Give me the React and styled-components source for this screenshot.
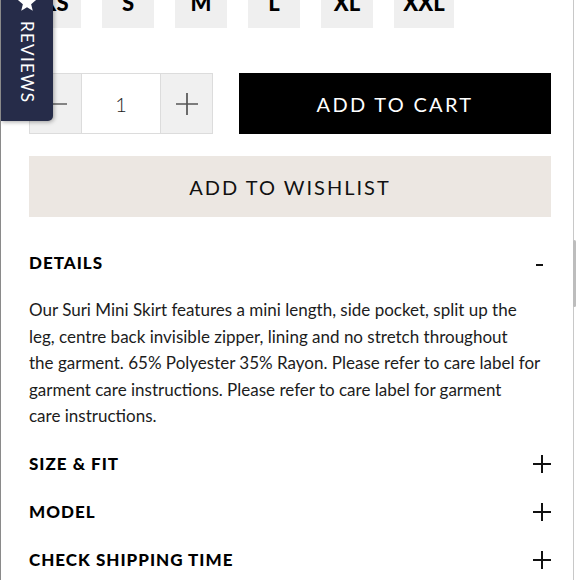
import React from "react"
import styled, { createGlobalStyle } from "styled-components"

const GlobalStyle = createGlobalStyle`
  html, body {
    margin: 0;
    padding: 0;
    background: #fff;
    overflow: hidden;
  }
  body {
    font-family: "Lato", "Open Sans", sans-serif;
    color: #111;
  }
`

const Frame = styled.div`
  position: relative;
  width: 580px;
  height: 580px;
  overflow: hidden;
  box-sizing: border-box;
  border-left: 1px solid #8a8a8a;
`

const RightEdge = styled.div`
  position: absolute;
  top: 0;
  bottom: 0;
  left: 572px;
  width: 1px;
  background: #c8c8c8;
`

const ScrollThumb = styled.div`
  position: absolute;
  top: 240px;
  left: 572px;
  width: 3px;
  height: 67px;
  border-radius: 2px;
  background: #bdbdbd;
`

const Content = styled.div`
  width: 522px;
  margin-left: 28px;
  margin-top: -24px;
  display: flex;
  flex-direction: column;
`

const SizeRow = styled.div`
  display: flex;
  gap: 21px;
`

const SizeBox = styled.div`
  width: ${(p) => (p.$wide ? 60 : 52)}px;
  height: 52px;
  background: #efefef;
  display: flex;
  align-items: center;
  justify-content: center;
  font-weight: 900;
  font-size: 22px;
  color: #000;
`

const BuyRow = styled.div`
  display: flex;
  margin-top: 45px;
  height: 61px;
  gap: 26px;
`

const Qty = styled.div`
  display: flex;
  border: 1px solid #dcdcdc;
  box-sizing: border-box;
  width: 184px;
`

const QtyButton = styled.div`
  width: 51px;
  background: #f0f0f0;
  display: flex;
  align-items: center;
  justify-content: center;
`

const QtyValue = styled.div`
  flex: 1;
  background: #fff;
  border-left: 1px solid #dcdcdc;
  border-right: 1px solid #dcdcdc;
  display: flex;
  align-items: center;
  justify-content: center;
  font-size: 20px;
  font-weight: 300;
  color: #222;
`

const CartButton = styled.div`
  flex: 1;
  background: #000;
  color: #fff;
  display: flex;
  align-items: center;
  justify-content: center;
  font-size: 20px;
  font-weight: 400;
  letter-spacing: 2.3px;
`

const WishButton = styled.div`
  margin-top: 22px;
  height: 61px;
  background: #ece7e2;
  display: flex;
  align-items: center;
  justify-content: center;
  font-size: 20px;
  letter-spacing: 2px;
  color: #111;
`

const Section = styled.div`
  display: flex;
  flex-direction: column;
  margin-top: ${(p) => p.$top || 0}px;
`

const SectionHead = styled.div`
  height: 48px;
  display: flex;
  align-items: center;
  justify-content: space-between;
  font-weight: 900;
  font-size: 17px;
  letter-spacing: 1px;
  color: #000;
`

const Dash = styled.span`
  width: 7px;
  height: 2px;
  background: #111;
  margin-right: 8px;
  margin-top: 6px;
`

const Body = styled.p`
  margin: 11px 0 10px;
  font-size: 17px;
  line-height: 26.5px;
  color: #1c1c1c;
  white-space: nowrap;
`

const Tab = styled.div`
  position: absolute;
  left: 0;
  top: -20px;
  width: 52px;
  height: 141px;
  background: #262c49;
  border-bottom-right-radius: 5px;
  box-shadow: 1px 1px 4px rgba(0, 0, 0, 0.35);
  display: flex;
  flex-direction: column;
  align-items: center;
  padding-top: 13px;
  box-sizing: border-box;
  gap: 9px;
`

const TabLabel = styled.span`
  writing-mode: vertical-rl;
  color: #fff;
  font-size: 17px;
  letter-spacing: 1.3px;
`

const Plus = ({ size = 18, stroke = 2, color = "#111" }) => (
  <svg width={size} height={size} viewBox="0 0 18 18">
    <path d="M9 0V18M0 9H18" stroke={color} strokeWidth={stroke} fill="none" />
  </svg>
)

const Minus = ({ size = 22, stroke = 1.4, color = "#555" }) => (
  <svg width={size} height={size} viewBox="0 0 22 22">
    <path d="M0 11H22" stroke={color} strokeWidth={stroke} fill="none" />
  </svg>
)

const Star = () => (
  <svg width="20" height="19" viewBox="0 0 24 23">
    <path d="M12 0l3.1 7.6 8.2.6-6.3 5.3 2 8L12 17.2 5 21.5l2-8L.7 8.2l8.2-.6z" fill="#fff" />
  </svg>
)

const sizes = ["XS", "S", "M", "L", "XL", "XXL"]
const detailLines = [
  "Our Suri Mini Skirt features a mini length, side pocket, split up the",
  "leg, centre back invisible zipper, lining and no stretch throughout",
  "the garment. 65% Polyester 35% Rayon. Please refer to care label for",
  "garment care instructions. Please refer to care label for garment",
  "care instructions.",
]
const closed = [
  { title: "SIZE & FIT" },
  { title: "MODEL" },
  { title: "CHECK SHIPPING TIME" },
]

export default function App() {
  return (
    <Frame>
      <GlobalStyle />
      <Content>
        <SizeRow>
          {sizes.map((s) => (
            <SizeBox key={s} $wide={s === "XXL"}>{s}</SizeBox>
          ))}
        </SizeRow>
        <BuyRow>
          <Qty>
            <QtyButton><Minus /></QtyButton>
            <QtyValue>1</QtyValue>
            <QtyButton><Plus size={22} stroke={1.4} color="#555" /></QtyButton>
          </Qty>
          <CartButton>ADD TO CART</CartButton>
        </BuyRow>
        <WishButton>ADD TO WISHLIST</WishButton>
        <Section $top={21}>
          <SectionHead>
            DETAILS
            <Dash />
          </SectionHead>
          <Body>
            {detailLines.map((line, i) => (
              <React.Fragment key={i}>
                {line}
                {i < detailLines.length - 1 && <br />}
              </React.Fragment>
            ))}
          </Body>
        </Section>
        {closed.map((c) => (
          <SectionHead key={c.title}>
            {c.title}
            <Plus size={18} />
          </SectionHead>
        ))}
      </Content>
      <Tab>
        <Star />
        <TabLabel>REVIEWS</TabLabel>
      </Tab>
      <RightEdge />
      <ScrollThumb />
    </Frame>
  )
}
